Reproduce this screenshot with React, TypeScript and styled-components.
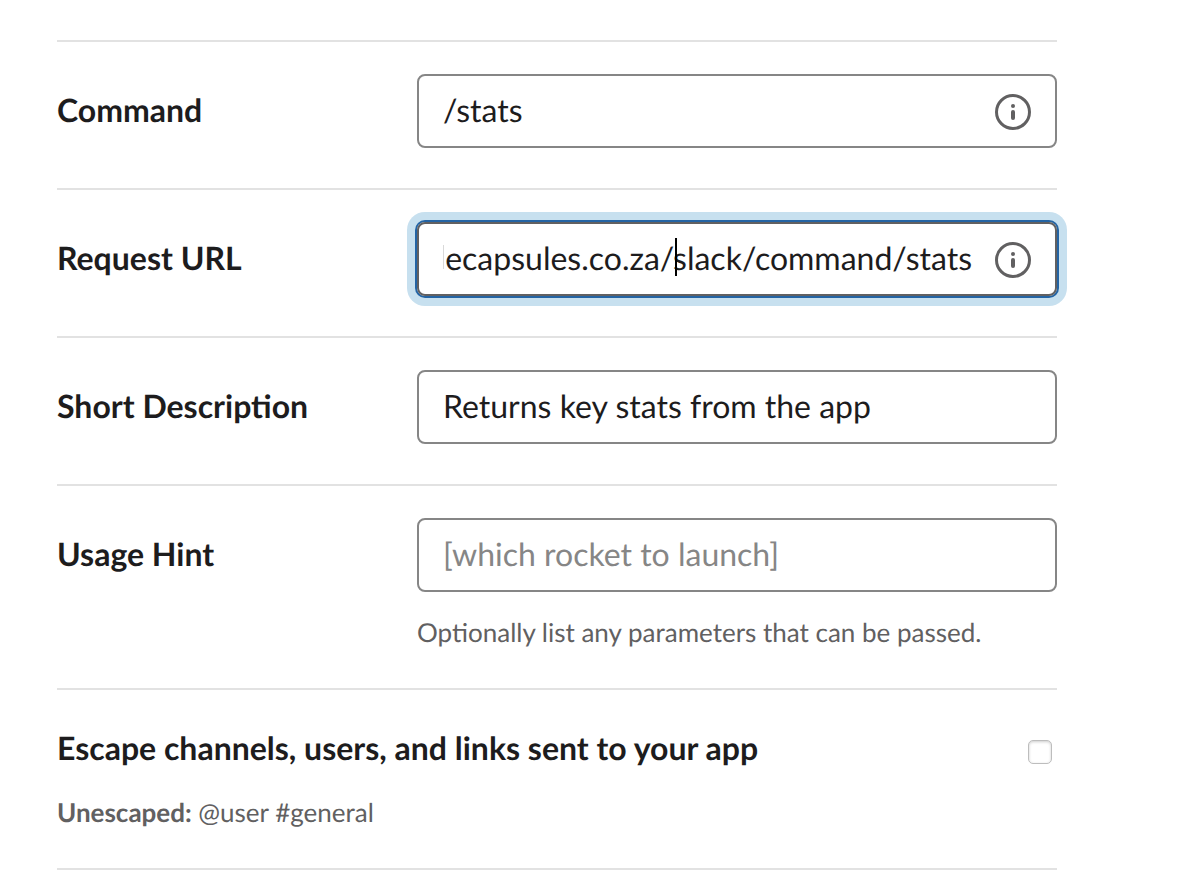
import React from 'react';
import styled, { createGlobalStyle, css } from 'styled-components';

const GlobalStyle = createGlobalStyle`
  * { box-sizing: border-box; }
  body {
    margin: 0;
    background: #fff;
    color: #1d1c1d;
    font-family: Lato, sans-serif;
    text-rendering: geometricPrecision;
    overflow: hidden;
  }
`;

const Form = styled.main`
  width: 1000px;
  height: 890px;
  margin-left: 57px;
  padding-top: 40px;
`;

const Row = styled.section<{ $height: number }>`
  display: flex;
  height: ${(p) => p.$height}px;
  padding-top: 32px;
  border-top: 2px solid #e2e2e2;
`;

const Label = styled.label`
  width: 360px;
  flex: none;
  font-size: 32px;
  font-weight: 700;
  line-height: 72px;
  white-space: nowrap;
`;

const Control = styled.div`
  flex: 1;
`;

const Field = styled.div<{ $focused?: boolean }>`
  display: flex;
  align-items: center;
  justify-content: space-between;
  height: 74px;
  padding: 0 24px;
  border: 2px solid #868686;
  border-radius: 8px;
  ${(p) =>
    p.$focused &&
    css`
      border-color: #616061;
      box-shadow: 0 0 0 2px #2464a4, 0 0 0 10px #c7e0ef;
    `}

  svg {
    flex: none;
    margin-top: 2px;
  }
`;

const Value = styled.span<{ $placeholder?: boolean }>`
  padding-bottom: 2px;
  font-size: 32px;
  line-height: 40px;
  white-space: nowrap;
  color: ${(p) => (p.$placeholder ? '#868686' : '#1d1c1d')};
`;

const ScrolledValue = styled(Value)`
  position: relative;
  display: flex;
  justify-content: space-between;
  width: 529px;
  margin-right: auto;
`;

/* Edge of the character scrolled out at the left of the input */
const ScrolledEdge = styled.span`
  width: 1px;
  height: 24px;
  margin-top: 7px;
  background: #d9d9d9;
`;

const Caret = styled.span`
  position: absolute;
  top: 0;
  left: 232px;
  width: 2px;
  height: 38px;
  background: #000;
`;

const Hint = styled.p`
  margin: 23px 0 0;
  font-size: 26px;
  line-height: 34px;
  color: #616061;
`;

const EscapeRow = styled(Row)`
  justify-content: space-between;
`;

const Title = styled.h2`
  margin: 6px 0 0;
  font-size: 32px;
  line-height: 40px;
  font-weight: 700;
`;

const Example = styled(Hint)`
  margin-top: 27px;
`;

const Checkbox = styled.input`
  appearance: none;
  width: 24px;
  height: 24px;
  margin: 18px 5px 0 0;
  border: 1px solid #bdbdbd;
  border-radius: 5px;
  background: #fff;
  box-shadow: inset 0 1px 3px rgba(0, 0, 0, 0.2);
`;

const InfoIcon = () => (
  <svg width="36" height="36" viewBox="0 0 36 36" fill="none">
    <circle cx="18" cy="18" r="16.5" stroke="#616061" strokeWidth="3" />
    <circle cx="18" cy="12" r="2" fill="#616061" />
    <path d="M18 18v6" stroke="#616061" strokeWidth="4" strokeLinecap="round" />
  </svg>
);

export default function App() {
  return (
    <>
      <GlobalStyle />
      <Form>
        <Row $height={148}>
          <Label>Command</Label>
          <Control>
            <Field>
              <Value>/stats</Value>
              <InfoIcon />
            </Field>
          </Control>
        </Row>
        <Row $height={148}>
          <Label>Request URL</Label>
          <Control>
            <Field $focused>
              <ScrolledValue>
                <ScrolledEdge />
                <span>ecapsules.co.za/slack/command/stats</span>
                <Caret />
              </ScrolledValue>
              <InfoIcon />
            </Field>
          </Control>
        </Row>
        <Row $height={148}>
          <Label>Short Description</Label>
          <Control>
            <Field>
              <Value>Returns key stats from the app</Value>
            </Field>
          </Control>
        </Row>
        <Row $height={204}>
          <Label>Usage Hint</Label>
          <Control>
            <Field>
              <Value $placeholder>[which rocket to launch]</Value>
            </Field>
            <Hint>Optionally list any parameters that can be passed.</Hint>
          </Control>
        </Row>
        <EscapeRow $height={180}>
          <div>
            <Title>Escape channels, users, and links sent to your app</Title>
            <Example>
              <b>Unescaped:</b> @user #general
            </Example>
          </div>
          <Checkbox type="checkbox" />
        </EscapeRow>
        <Row $height={22} />
      </Form>
    </>
  );
}
